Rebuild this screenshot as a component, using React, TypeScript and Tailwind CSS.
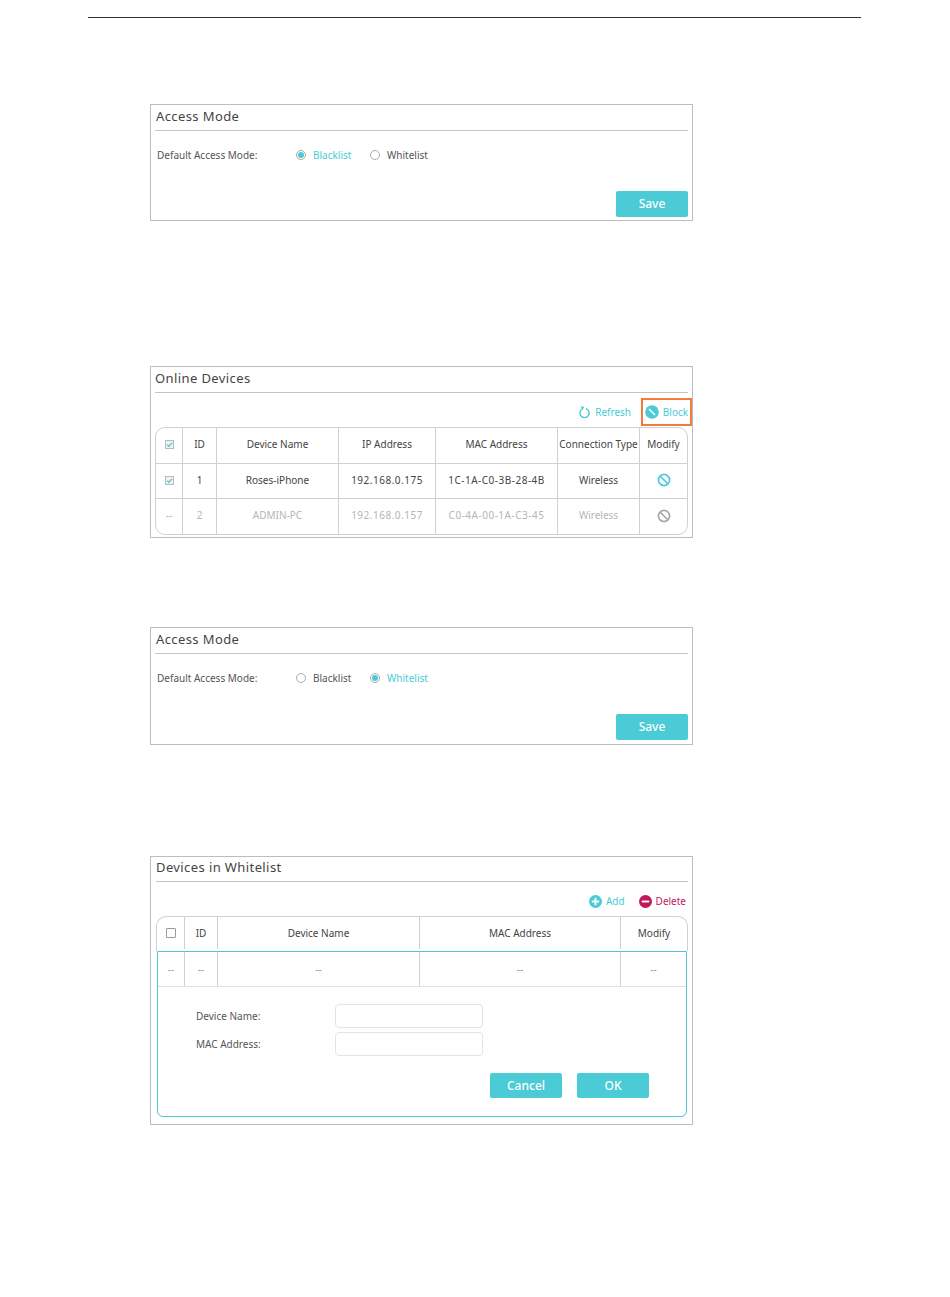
import React from "react";

const font = { fontFamily: '"Noto Sans", "DejaVu Sans", sans-serif' };

function Radio({ on, label }: { on?: boolean; label: string }) {
  return (
    <div className={`flex items-center gap-[7px] ${on ? "text-[#4acbd6]" : "text-[#555]"}`}>
      <span className="w-[10px] h-[10px] rounded-full border border-[#aaa] bg-white flex items-center justify-center">
        {on && <span className="w-[6px] h-[6px] rounded-full bg-[#4acbd6]" />}
      </span>
      {label}
    </div>
  );
}

function PanelTitle({ children, inset = "pl-px", h = "h-[26px]" }: { children: string; inset?: string; h?: string }) {
  return (
    <div className={`mx-[4px] ${h} pb-[2px] border-b border-[#c4c4c4] ${inset} flex items-center text-[13px] tracking-[0.4px] text-[#444]`}>
      {children}
    </div>
  );
}

function Btn({ children, className = "h-[26px]" }: { children: string; className?: string }) {
  return (
    <div className={`w-[72px] rounded-[2px] bg-[#4acbd6] text-white text-[12px] font-medium flex items-center justify-center ${className}`}>
      {children}
    </div>
  );
}

function AccessMode({ mode, className = "" }: { mode: "black" | "white"; className?: string }) {
  return (
    <section className={`w-[543px] border border-[#bdbdbd] bg-white flex flex-col ${className}`}>
      <PanelTitle inset="pl-[1px]">Access Mode</PanelTitle>
      <div className="flex items-center h-[20px] mt-[14px] pl-[6px] text-[10px] text-[#555]">
        <span className="w-[139px]">Default Access Mode:</span>
        <div className="w-[74px]"><Radio on={mode === "black"} label="Blacklist" /></div>
        <Radio on={mode === "white"} label="Whitelist" />
      </div>
      <div className={`mt-auto mr-[4px] flex justify-end ${mode === "black" ? "mb-[3px]" : "mb-[4px]"}`}>
        <Btn>Save</Btn>
      </div>
    </section>
  );
}

function Check({ on }: { on?: boolean }) {
  return (
    <span className="w-[9px] h-[9px] border border-[#bbb] bg-[#f1f1f1] flex items-center justify-center">
      {on && (
        <svg viewBox="0 0 9 9" className="w-[9px] h-[9px]">
          <path d="M1.5 4.8 3.6 6.8 7.8 2.4" fill="none" stroke="#4acbd6" strokeWidth="1.6" />
        </svg>
      )}
    </span>
  );
}

function Ban({ color }: { color: string }) {
  return (
    <svg viewBox="0 0 14 14" className="w-[14px] h-[14px]">
      <circle cx="7" cy="7" r="5.6" fill="none" stroke={color} strokeWidth="1.7" />
      <path d="M3 3 11 11" stroke={color} strokeWidth="1.7" />
    </svg>
  );
}

function RefreshIcon() {
  return (
    <svg viewBox="0 0 14 14" className="w-[13px] h-[14px]">
      <path d="M4.4 3.8A5 5 0 1 0 8.6 3.3" fill="none" stroke="#4acbd6" strokeWidth="1.5" />
      <path d="M3 0.8 6.8 1.6 4.6 5Z" fill="#4acbd6" />
    </svg>
  );
}

function BlockIcon() {
  return (
    <svg viewBox="0 0 14 14" className="w-[14px] h-[14px]">
      <circle cx="7" cy="7" r="6.8" fill="#4acbd6" />
      <path d="M4 4 10 10" stroke="#fff" strokeWidth="1.6" />
    </svg>
  );
}

function RoundIcon({ color, plus }: { color: string; plus?: boolean }) {
  return (
    <svg viewBox="0 0 14 14" className="w-[13px] h-[13px]">
      <circle cx="7" cy="7" r="7" fill={color} />
      <path d="M3 7H11" stroke="#fff" strokeWidth="2" />
      {plus && <path d="M7 3V11" stroke="#fff" strokeWidth="2" />}
    </svg>
  );
}

const onlineCols = "grid-cols-[27px_34px_122px_97px_122px_82px_1fr]";

function OnlineRow({ cells, className = "" }: { cells: React.ReactNode[]; className?: string }) {
  return (
    <div className={`grid ${onlineCols} ${className}`}>
      {cells.map((c, i) => (
        <div key={i} className={`pb-[2px] flex items-center justify-center whitespace-nowrap ${i < 6 ? "border-r border-[#d0d0d0]" : ""} ${i === 3 || i === 4 ? "tracking-[0.5px]" : ""}`}>
          {c}
        </div>
      ))}
    </div>
  );
}

function OnlineDevices() {
  return (
    <section className="mt-[145px] w-[543px] h-[172px] border border-[#bdbdbd] bg-white">
      <PanelTitle inset="pl-0">Online Devices</PanelTitle>
      <div className="h-[34px] pt-[5px] flex items-start justify-end text-[10px] text-[#4acbd6]">
        <div className="h-[28px] flex items-center gap-[4px] mr-[10px]"><RefreshIcon />Refresh</div>
        <div className="w-[51px] h-[28px] border-2 border-[#f47b3e] flex items-center justify-center gap-[4px]">
          <BlockIcon />Block
        </div>
      </div>
      <div className="mx-[4px] border border-[#d0d0d0] rounded-[10px] text-[10px] text-[#444] overflow-hidden">
        <OnlineRow
          className="h-[36px] border-b border-[#d0d0d0]"
          cells={[<Check on />, "ID", "Device Name", <span className="tracking-normal">IP Address</span>, <span className="tracking-normal">MAC Address</span>, "Connection Type", "Modify"]}
        />
        <OnlineRow
          className="h-[35px] border-b border-[#d0d0d0]"
          cells={[<Check on />, "1", "Roses-iPhone", "192.168.0.175", "1C-1A-C0-3B-28-4B", "Wireless", <Ban color="#4acbd6" />]}
        />
        <OnlineRow
          className="h-[35px] text-[#b5b5b5]"
          cells={["--", "2", "ADMIN-PC", "192.168.0.157", "C0-4A-00-1A-C3-45", "Wireless", <Ban color="#a8a8a8" />]}
        />
      </div>
    </section>
  );
}

function WhiteRow({ cols, cells, className = "" }: { cols: string; cells: React.ReactNode[]; className?: string }) {
  return (
    <div className={`grid ${cols} ${className}`}>
      {cells.map((c, i) => (
        <div key={i} className={`flex items-center justify-center ${i < 4 ? "border-r border-[#d0d0d0]" : ""}`}>
          {c}
        </div>
      ))}
    </div>
  );
}

function Field({ label }: { label: string }) {
  return (
    <div className="flex items-center text-[10px] text-[#555]">
      <span className="w-[139px]">{label}</span>
      <div className="w-[148px] h-[24px] rounded-[4px] border border-[#e4e4e4] bg-white" />
    </div>
  );
}

function Whitelist() {
  return (
    <section className="mt-[111px] w-[543px] h-[269px] border border-[#bdbdbd] bg-white">
      <PanelTitle h="h-[25px]" inset="ml-[5px]">Devices in Whitelist</PanelTitle>
      <div className="h-[34px] pt-[4px] flex items-center justify-end gap-[14px] pr-[6px] text-[10px]">
        <div className="flex items-center gap-[4px] text-[#4acbd6]"><RoundIcon color="#4acbd6" plus />Add</div>
        <div className="flex items-center gap-[4px] text-[#c2185b]"><RoundIcon color="#c2185b" />Delete</div>
      </div>
      <div className="ml-[5px] mr-[4px] border-t border-x border-[#d0d0d0] rounded-t-[10px] text-[10px] text-[#444]">
        <WhiteRow
          cols="grid-cols-[28px_33px_202px_201px_1fr]"
          className="h-[34px] pb-[2px]"
          cells={[
            <span className="w-[10px] h-[10px] border border-[#999] rounded-[1px] bg-white" />,
            "ID",
            "Device Name",
            "MAC Address",
            "Modify",
          ]}
        />
      </div>
      <div className="ml-[6px] mr-[5px] h-[166px] border border-[#4fc3cf] rounded-b-[6px] text-[10px]">
        <WhiteRow
          cols="grid-cols-[27px_33px_202px_201px_1fr]"
          className="h-[35px] border-b border-[#e0e0e0] text-[#999]"
          cells={["--", "--", "--", "--", "--"]}
        />
        <div className="pt-[17px] pl-[38px] flex flex-col gap-[4px]">
          <Field label="Device Name:" />
          <Field label="MAC Address:" />
        </div>
        <div className="mt-[17px] flex justify-end gap-[15px] pr-[37px]">
          <Btn className="h-[25px]">Cancel</Btn>
          <Btn className="h-[25px]">OK</Btn>
        </div>
      </div>
    </section>
  );
}

export default function App() {
  return (
    <main className="w-[950px] h-[1297px] bg-white overflow-hidden" style={font}>
      <div className="pt-[17px] mx-[88px] w-[773px] border-b border-[#333]" />
      <div className="pl-[150px] pt-[86px]">
        <AccessMode mode="black" className="h-[117px]" />
        <OnlineDevices />
        <AccessMode mode="white" className="h-[118px] mt-[89px]" />
        <Whitelist />
      </div>
    </main>
  );
}
